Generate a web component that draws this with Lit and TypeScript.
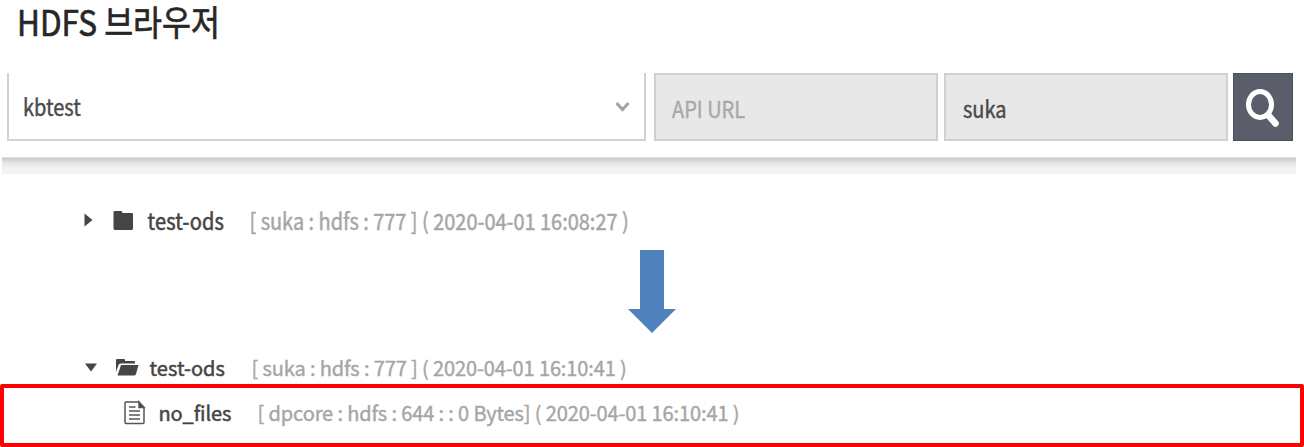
import { LitElement, html, css } from "lit";
import { customElement } from "lit/decorators.js";

@customElement("app-root")
export class AppRoot extends LitElement {
  static styles = css`
    :host {
      display: flex;
      flex-direction: column;
      box-sizing: border-box;
      width: 1304px;
      height: 447px;
      background: #fff;
      color: #4a4a4a;
      font-family: "Noto Sans CJK KR", "Noto Sans", sans-serif;
      font-size: 20px;
    }
    * { box-sizing: border-box; }
    svg { display: block; flex: none; }
    h1 {
      margin: 0;
      padding: 0 0 0 17px;
      height: 73px;
      font-size: 31.5px;
      font-weight: 400;
      line-height: 40px;
      color: #262626;
      white-space: nowrap;
      -webkit-text-stroke: 0.6px #262626;
    }
    h1 span, .t { display: inline-block; transform-origin: 0 50%; white-space: pre; }
    h1 span { transform: scaleY(1.12); }
    .bar { display: flex; height: 68px; padding-left: 7px; line-height: 68px; }
    .tall { transform: scaleY(1.13); }
    .bar .t { -webkit-text-stroke: 0.4px currentColor; }
    .select {
      display: flex;
      align-items: center;
      justify-content: space-between;
      width: 639px;
      padding: 2px 14px 0;
      border: 2px solid #d2d2d2;
      border-top: 0;
      margin-right: 8px;
    }
    .input {
      width: 284px;
      height: 68px;
      padding-left: 16px;
      border: 2px solid #d0d0d0;
      background: #e8e8e8;
      margin-right: 6px;
    }
    .input.user { margin-right: 5px; padding-left: 17px; }
    .placeholder { color: #a9a9a9; }
    .search {
      width: 60px;
      height: 68px;
      padding: 14px 0 0 12px;
      border: 1px solid #4b4f5c;
      background: #5a5e6b;
    }
    .strip {
      flex: none;
      width: 1294px;
      height: 17px;
      margin: 16px 0 0 2px;
      background: linear-gradient(#e4e4e4 0, #cfcfcf 1.5px, #d2d2d2 3px, #e2e2e2 5px, #ededed 9px, #f2f2f2 12px, #f3f3f3 100%);
    }
    .row { display: flex; align-items: center; height: 40px; white-space: nowrap; }
    .row.first { margin-top: 26px; padding-left: 83px; }
    .row.second { margin-top: 13px; padding-left: 83px; }
    .name { color: #454545; -webkit-text-stroke: 0.5px #454545; }
    .meta { color: #a6a6a6; -webkit-text-stroke: 0.4px #a6a6a6; letter-spacing: -0.12px; }
    .first .name { width: 102px; margin-left: 12.5px; letter-spacing: 0.2px; }
    .first .meta { letter-spacing: -0.03px; }
    .second .name { width: 102px; margin-left: 10.5px; letter-spacing: 0.05px; }
    .third .name { width: 99px; margin-left: 11.5px; letter-spacing: -0.1px; }
    .arrow { margin: 10px 0 0 628px; }
    .highlight {
      flex: none;
      height: 63px;
      margin-top: -3px;
      border: 4px solid #f00;
      border-radius: 2px;
    }
    .third { height: 50px; padding-left: 119px; }
    .third .t { margin-top: -2px; }
  `;

  render() {
    return html`
      <h1><span>HDFS 브라우저</span></h1>
      <div class="bar">
        <div class="select">
          <span class="t tall">kbtest</span>
          <svg width="16" height="12" viewBox="0 0 16 12"><path d="M2.500 2 8.500 8.500 14.500 2" fill="none" stroke="#a3a3a3" stroke-width="3"/></svg>
        </div>
        <div class="input placeholder"><span class="t tall">API URL</span></div>
        <div class="input user"><span class="t tall">suka</span></div>
        <div class="search">
          <svg width="36" height="42" viewBox="0 0 36 42" fill="none" stroke="#fff">
            <ellipse cx="14" cy="16.500" rx="11.500" ry="13" stroke-width="5"/>
            <path d="M23 28 29.500 35.500" stroke-width="6.500" stroke-linecap="round"/>
          </svg>
        </div>
      </div>
      <div class="strip"></div>
      <div class="row first">
        <svg width="52" height="26" viewBox="0 0 52 26" fill="#454545">
          <path d="M1.500 6.500 9.500 13 1.500 19.500Z"/>
          <path d="M30.500 5Q30.500 4 31.500 4H38Q39.500 4 39.500 6H49Q50 6 50 7V21.500Q50 23 48.500 23H32Q30.500 23 30.500 21.500Z"/>
        </svg>
        <span class="t tall name">test-ods</span>
        <span class="t tall meta">[ suka : hdfs : 777 ] ( 2020-04-01 16:08:27 )</span>
      </div>
      <svg class="arrow" width="48" height="84" viewBox="0 0 48 84"><path d="M12 0h24v59h12L24 83 0 59h12Z" fill="#4f81bd"/></svg>
      <div class="row second">
        <svg width="56" height="22" viewBox="0 0 56 22" fill="#454545">
          <path d="M2 7.500h12L8 15.500Z"/>
          <path d="M33 16V4Q33 3 34 3H41Q42 3 42 4V5H51Q52 5 52 6V7.500H37.500Q36 7.500 35.500 9Z"/>
          <path d="M38 9H55.500L53 18Q52.500 19.500 51 19.500H34.500Z"/>
        </svg>
        <span class="t name">test-ods</span>
        <span class="t meta">[ suka : hdfs : 777 ] ( 2020-04-01 16:10:41 )</span>
      </div>
      <div class="highlight">
        <div class="row third">
          <svg width="24" height="26" viewBox="0 0 24 26" fill="none" stroke="#555" stroke-width="1.500">
            <path d="M3 2H15.500L21 7.500V22.500Q21 23.500 20 23.500H3Q2 23.500 2 22.500V3Q2 2 3 2Z"/>
            <path d="M16 2V7.500H21Z" fill="#454545"/>
            <path d="M6 7H12.500M6 11H17M6 15H17M6 19H17"/>
          </svg>
          <span class="t name">no_files</span>
          <span class="t meta">[ dpcore : hdfs : 644 : : 0 Bytes] ( 2020-04-01 16:10:41 )</span>
        </div>
      </div>
    `;
  }
}
